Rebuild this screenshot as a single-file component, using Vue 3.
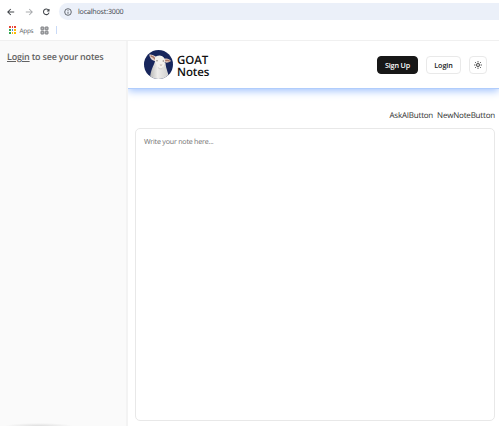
<script setup>
const appDots = ['#e94335', '#e94335', '#e94335', '#34a853', '#4285f4', '#fbbc05', '#34a853', '#fbbc05', '#fbbc05']
const rays = [0, 45, 90, 135, 180, 225, 270, 315]
</script>

<template>
  <div class="window">
    <div class="browser">
      <div class="address-row">
        <svg class="nav" viewBox="0 0 10 10"><path d="M8.2 5H1.8M4.8 2L1.8 5L4.8 8" /></svg>
        <svg class="nav off" viewBox="0 0 10 10"><path d="M1.8 5H8.2M5.2 2L8.2 5L5.2 8" /></svg>
        <svg class="nav" viewBox="0 0 10 10"><path d="M7.6 3.2A2.8 2.8 0 1 0 8 5.6M8 1.9V3.9H5.9" /></svg>
        <div class="address">
          <svg class="info" viewBox="0 0 10 10"><circle cx="5" cy="5" r="3.3" /><path d="M5 4.7V6.8M5 3.1V3.9" /></svg>
          <span>localhost:3000</span>
        </div>
      </div>
      <div class="bookmarks">
        <div class="dots"><i v-for="(c, i) in appDots" :key="i" :style="{ background: c }"></i></div>
        <span class="apps">Apps</span>
        <svg class="grid-icon" viewBox="0 0 9 9">
          <rect x="1" y="1" width="2.8" height="2.8" rx=".3" /><rect x="5.2" y="1" width="2.8" height="2.8" rx=".3" />
          <rect x="1" y="5.2" width="2.8" height="2.8" rx=".3" /><rect x="5.2" y="5.2" width="2.8" height="2.8" rx=".3" />
        </svg>
        <span class="sep"></span>
      </div>
    </div>
    <div class="page">
      <aside>
        <p><a>Login</a> to see your notes</p>
        <div class="status"></div>
      </aside>
      <main>
        <header>
          <svg class="goat" viewBox="0 0 30 30">
            <defs>
              <clipPath id="disc"><circle cx="14.5" cy="14.5" r="14.5" /></clipPath>
              <linearGradient id="wool" x1="0" x2="1"><stop stop-color="#b9b9b8" /><stop offset=".4" stop-color="#eeedeb" /><stop offset="1" stop-color="#cfcfce" /></linearGradient>
            </defs>
            <g clip-path="url(#disc)">
              <rect width="30" height="30" fill="#17265c" />
              <path d="M11 11C10 16 6 20 6 30H25C25 23 22 20 21.5 13Z" fill="url(#wool)" />
              <path d="M12 11C8 11 5.8 8.5 5.3 4.5C8 4.5 12 6 13 8Z" fill="#e5d5ce" />
              <path d="M6.6 5.8C8.5 6.3 10.3 7.5 11.3 9.3" stroke="#a97768" stroke-width="1.5" fill="none" />
              <path d="M20 9C23 8 25.5 9 27 11C24 13.4 21.5 12.9 20 11.8Z" fill="#dbc2b8" />
              <path d="M21.3 10.7C23 10 24.5 10.3 25.8 11.2" stroke="#ab7768" stroke-width="1.3" fill="none" />
              <path d="M11 8C12.5 4.7 18.5 4.7 20.5 8.5C21.5 11 20.5 16 18.5 18C17 19.2 14.5 18 13.2 16C12 14 10.4 11 11 8Z" fill="#f3f1ed" />
              <circle cx="13" cy="10.8" r=".7" fill="#80746e" /><circle cx="19.3" cy="11" r=".7" fill="#80746e" />
              <path d="M15.9 14.8L17.1 15.3L18.2 14.6" fill="none" stroke="#a58d86" stroke-width=".7" />
              <path d="M14 17.5C15.3 19.2 17.5 19.3 18.7 17.7" fill="none" stroke="#cbc9c6" stroke-width=".8" />
            </g>
          </svg>
          <h1>GOAT<br>Notes</h1>
          <nav>
            <button class="signup">Sign Up</button>
            <button class="login">Login</button>
            <button class="theme">
              <svg viewBox="0 0 10 10">
                <circle cx="5" cy="5" r="1.5" />
                <path v-for="r in rays" :key="r" d="M5 1.1V2.4" :transform="`rotate(${r} 5 5)`" />
              </svg>
            </button>
          </nav>
        </header>
        <section>
          <div class="actions"><span class="ask">AskAIButton</span><span class="new">NewNoteButton</span></div>
          <div class="note">Write your note here...</div>
        </section>
      </main>
    </div>
  </div>
</template>

<style>
body { margin: 0; background: #fff; }
</style>
<style scoped>
* { box-sizing: border-box; }
.window { width: 499px; height: 426px; display: flex; flex-direction: column; overflow: hidden; font-family: "Open Sans", "Noto Sans", sans-serif; color: #171717; background: #fff; text-rendering: geometricPrecision; }
.browser { height: 41px; flex: none; border-bottom: 1px solid #f0f0f0; }
.address-row { display: flex; align-items: center; padding: 3px 0 0 6px; height: 20px; }
.nav { width: 10px; height: 10px; margin-right: 8px; fill: none; stroke: #42464b; stroke-width: 1.05; flex: none; }
.nav.off { stroke: #a9abae; margin-right: 7px; }
.address { display: flex; align-items: center; flex: 1; height: 17px; padding-left: 4px; background: #ebf0f9; border-radius: 9px 0 0 9px; font-size: 7.1px; letter-spacing: -.17px; color: #3d4147; }
.address span { padding-top: 1px; line-height: 11px; }
.info { width: 10px; height: 10px; margin-right: 5px; fill: none; stroke: #4b5056; stroke-width: .85; }
.bookmarks { display: flex; align-items: center; height: 20px; padding-left: 9px; }
.dots { display: grid; grid-template-columns: repeat(3, 1.7px); gap: 1px; width: 8px; }
.dots i { height: 1.7px; }
.apps { width: 14px; margin-left: 2.5px; font-size: 6.3px; letter-spacing: -.2px; color: #54575b; }
.grid-icon { width: 9px; height: 9px; margin-left: 6.5px; fill: #b8b9bb; stroke: #7b7d80; stroke-width: 1; }
.sep { width: 1px; height: 8px; margin-left: 7px; background: #c9daf7; }
.page { display: flex; flex: 1; min-height: 0; }
aside { width: 128px; flex: none; display: flex; flex-direction: column; justify-content: space-between; background: #fafafa; border-right: 2px solid #f3f3f3; overflow: hidden; }
aside p { margin: 9px 0 0 7px; font-size: 9px; line-height: 14px; font-weight: 600; color: #626262; white-space: nowrap; letter-spacing: -.2px; }
aside a { text-decoration: underline; text-underline-offset: 1px; text-decoration-thickness: 1px; }
.status { width: 70px; height: 28px; margin-left: 4px; background: radial-gradient(ellipse 34px 3px at 50% 100%, #dedede, #fafafa00); }
main { flex: 1; min-width: 0; display: flex; flex-direction: column; }
header { height: 48px; flex: none; display: flex; align-items: center; padding: 0 12px 0 16px; border-bottom: 1px solid #b1cdfc; box-shadow: 0 2px 8px #a0c2fd; clip-path: inset(0 0 -15px 0); }
.goat { width: 30px; height: 30px; }
h1 { margin: 5px 0 0 3px; font-size: 11.5px; line-height: 12px; font-weight: 600; color: #111; letter-spacing: -.09px; }
nav { display: flex; gap: 8px; margin-left: auto; }
button { height: 18px; padding: 0; border: 1px solid #e9e9e9; border-radius: 4px; background: #fff; color: #222; font: 600 7.2px/14px "Open Sans", sans-serif; }
.signup { width: 41px; background: #171717; border-color: #171717; color: #fff; letter-spacing: -.14px; }
.login { width: 35px; letter-spacing: -.08px; }
.theme { width: 18px; display: flex; align-items: center; justify-content: center; }
.theme svg { width: 10px; height: 10px; flex: none; fill: none; stroke: #333; stroke-width: .9; }
section { flex: 1; min-height: 0; display: flex; flex-direction: column; padding: 19px 4px 5px 7px; }
.actions { display: flex; justify-content: flex-end; height: 20px; font-size: 8px; line-height: 15px; color: #303030; }
.ask { margin-right: 4px; letter-spacing: -.21px; }
.new { letter-spacing: -.19px; }
.note { flex: 1; padding: 8px; border: 1px solid #e8e8e8; border-radius: 5px; font-size: 7.1px; line-height: 11px; color: #707070; letter-spacing: -.21px; }
</style>
